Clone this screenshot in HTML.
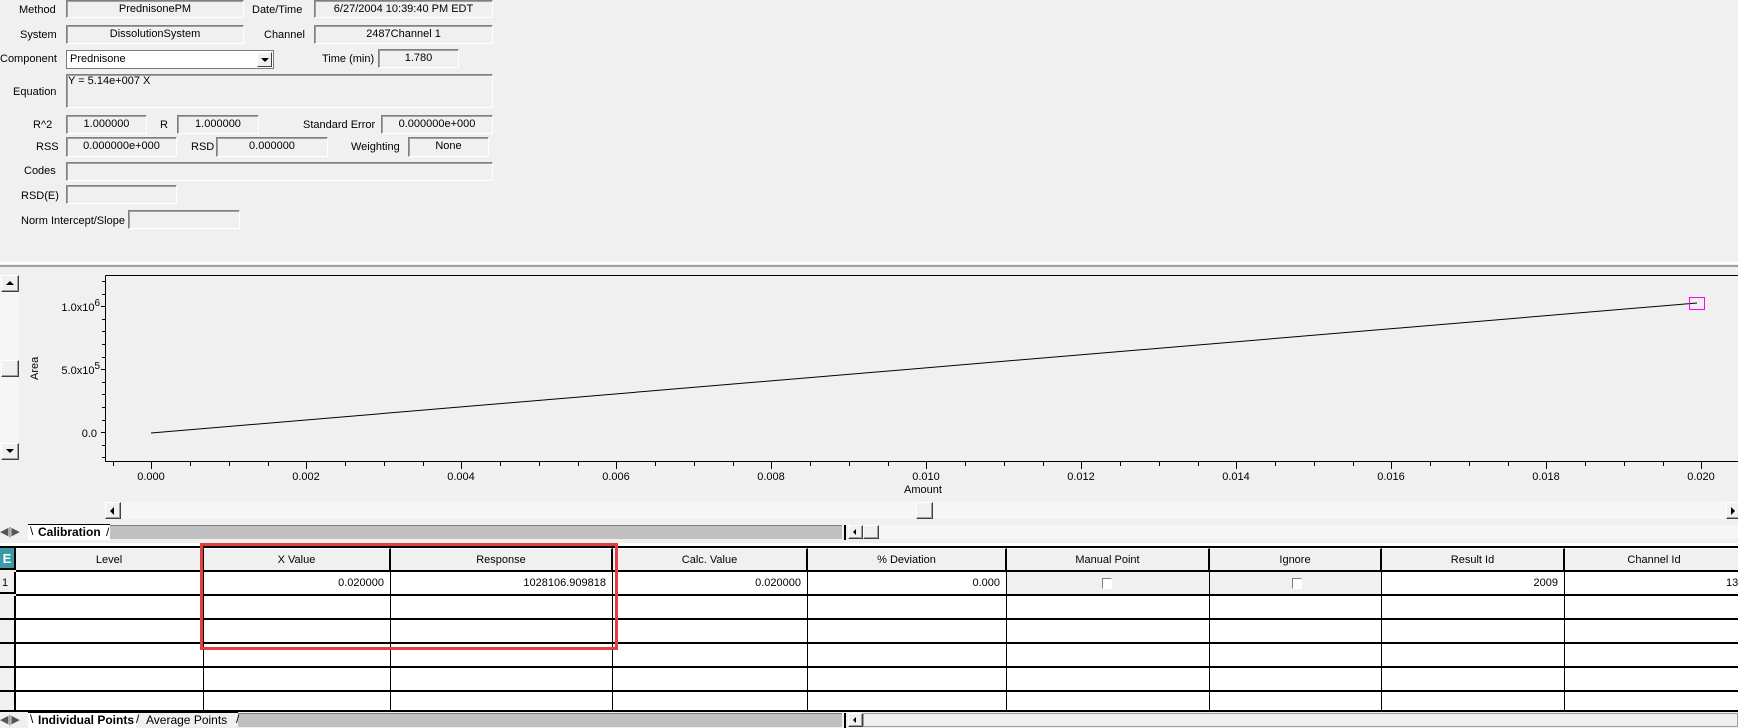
<!DOCTYPE html>
<html><head><meta charset="utf-8"><style>
*{margin:0;padding:0;box-sizing:border-box}
body{width:1738px;height:728px;background:#f0f0f0;position:relative;overflow:hidden;font-family:"Liberation Sans",Arial,sans-serif;font-size:11px;color:#000}
.a{position:absolute;white-space:nowrap}
.bx{position:absolute;border:1px solid;border-color:#808080 #fff #fff #808080;background:#f0f0f0;text-align:center;line-height:16px;box-shadow:inset 1px 1px 0 #a0a0a0}
.lb{position:absolute;white-space:nowrap;line-height:14px}
.g{position:absolute;border-right:1px solid #000;border-bottom:2px solid #000;background:#fff;text-align:right;padding-right:6px;line-height:22px}
.h{position:absolute;border-right:2px solid #000;border-bottom:2px solid #000;background:#f0f0f0;text-align:center;line-height:22px;border-top:1px solid #fff}
.btn{position:absolute;background:#f0f0f0;border:1px solid;border-color:#fff #404040 #404040 #fff;box-shadow:inset -1px -1px 0 #a0a0a0}
.dot{position:absolute;background:#f6f6f6}
</style></head><body>
<div class="lb" style="left:19px;top:3px">Method</div>
<div class="bx" style="left:66px;top:0;width:178px;height:18px">PrednisonePM</div>
<div class="lb" style="left:252px;top:3px">Date/Time</div>
<div class="bx" style="left:314px;top:0;width:179px;height:18px">6/27/2004 10:39:40 PM EDT</div>
<div class="lb" style="left:20px;top:28px">System</div>
<div class="bx" style="left:66px;top:25px;width:178px;height:19px">DissolutionSystem</div>
<div class="lb" style="left:264px;top:28px">Channel</div>
<div class="bx" style="left:314px;top:25px;width:179px;height:19px">2487Channel 1</div>
<div class="lb" style="left:0;top:52px">Component</div>
<div style="position:absolute;left:66px;top:50px;width:208px;height:19px;background:#fff;border:1px solid #7a7a7a;line-height:17px;padding-left:3px">Prednisone
<div style="position:absolute;right:1px;top:1px;width:15px;height:15px;border:1px solid;border-color:#fff #404040 #404040 #fff;background:#f0f0f0"><div style="position:absolute;left:3px;top:5px;border-left:4px solid transparent;border-right:4px solid transparent;border-top:4px solid #000"></div></div></div>
<div class="lb" style="left:322px;top:52px">Time (min)</div>
<div class="bx" style="left:378px;top:49px;width:81px;height:19px">1.780</div>
<div class="lb" style="left:13px;top:85px">Equation</div>
<div class="bx" style="left:66px;top:74px;width:427px;height:34px;text-align:left;padding-left:1px;line-height:12px">Y = 5.14e+007 X</div>
<div class="lb" style="left:33px;top:118px">R^2</div>
<div class="bx" style="left:66px;top:115px;width:81px;height:19px">1.000000</div>
<div class="lb" style="left:160px;top:118px">R</div>
<div class="bx" style="left:177px;top:115px;width:82px;height:19px">1.000000</div>
<div class="lb" style="left:303px;top:118px">Standard Error</div>
<div class="bx" style="left:381px;top:115px;width:112px;height:19px">0.000000e+000</div>
<div class="lb" style="left:36px;top:140px">RSS</div>
<div class="bx" style="left:66px;top:137px;width:111px;height:20px">0.000000e+000</div>
<div class="lb" style="left:191px;top:140px">RSD</div>
<div class="bx" style="left:216px;top:137px;width:112px;height:20px">0.000000</div>
<div class="lb" style="left:351px;top:140px">Weighting</div>
<div class="bx" style="left:408px;top:137px;width:81px;height:20px">None</div>
<div class="lb" style="left:24px;top:164px">Codes</div>
<div class="bx" style="left:66px;top:162px;width:427px;height:19px"></div>
<div class="lb" style="left:21px;top:189px">RSD(E)</div>
<div class="bx" style="left:66px;top:185px;width:111px;height:19px"></div>
<div class="lb" style="left:21px;top:214px">Norm Intercept/Slope</div>
<div class="bx" style="left:128px;top:210px;width:112px;height:19px"></div>
<div class="a" style="left:0;top:262px;width:1738px;height:2px;background:#fff"></div>
<div class="a" style="left:0;top:265px;width:1738px;height:2px;background:#a0a0a0"></div>
<div class="dot" style="left:0;top:275px;width:19px;height:185px"></div>
<div class="btn" style="left:1px;top:275px;width:18px;height:17px"><div style="position:absolute;left:4px;top:5px;border-left:4px solid transparent;border-right:4px solid transparent;border-bottom:4px solid #000"></div></div>
<div class="btn" style="left:1px;top:360px;width:18px;height:17px"></div>
<div class="btn" style="left:1px;top:443px;width:18px;height:17px"><div style="position:absolute;left:4px;top:5px;border-left:4px solid transparent;border-right:4px solid transparent;border-top:4px solid #000"></div></div>
<svg class="a" style="left:0;top:268px" width="1738" height="232" font-family="Liberation Sans,Arial,sans-serif" font-size="11">
<g stroke="#000" stroke-width="1" fill="none">
<path d="M105.5 7.5H1738M105.5 7.5V193.5H1738"/>
<path d="M101 38.5h5M101 101.5h5M101 164.5h5M102 13.5h4M102 26.5h4M102 51.5h4M102 63.5h4M102 76.5h4M102 89.5h4M102 114.5h4M102 126.5h4M102 139.5h4M102 152.5h4M102 177.5h4M102 189.5h4"/>
<path d="M113.5 194v4M151.5 194v7M190.5 194v4M229.5 194v4M268.5 194v4M306.5 194v7M345.5 194v4M384.5 194v4M423.5 194v4M461.5 194v7M500.5 194v4M539.5 194v4M578.5 194v4M616.5 194v7M655.5 194v4M694.5 194v4M733.5 194v4M771.5 194v7M810.5 194v4M849.5 194v4M888.5 194v4M926.5 194v7M965.5 194v4M1004.5 194v4M1043.5 194v4M1081.5 194v7M1120.5 194v4M1159.5 194v4M1198.5 194v4M1236.5 194v7M1275.5 194v4M1314.5 194v4M1353.5 194v4M1391.5 194v7M1430.5 194v4M1469.5 194v4M1508.5 194v4M1546.5 194v7M1585.5 194v4M1624.5 194v4M1663.5 194v4M1701.5 194v7"/>
<path d="M151 165L1697 35"/>
</g>
<rect x="1689.5" y="29.5" width="15" height="12" fill="none" stroke="#f0f" stroke-width="1"/>
<text x="100" y="43" text-anchor="end">1.0x10<tspan dy="-5" font-size="10">6</tspan></text>
<text x="100" y="106" text-anchor="end">5.0x10<tspan dy="-5" font-size="10">5</tspan></text>
<text x="97" y="169" text-anchor="end">0.0</text>
<text transform="translate(38,112) rotate(-90)">Area</text>
<g text-anchor="middle">
<text x="151" y="212">0.000</text><text x="306" y="212">0.002</text><text x="461" y="212">0.004</text><text x="616" y="212">0.006</text><text x="771" y="212">0.008</text><text x="926" y="212">0.010</text><text x="1081" y="212">0.012</text><text x="1236" y="212">0.014</text><text x="1391" y="212">0.016</text><text x="1546" y="212">0.018</text><text x="1701" y="212">0.020</text>
<text x="923" y="225">Amount</text></g>
</svg>
<div class="dot" style="left:105px;top:502px;width:1633px;height:17px"></div>
<div class="btn" style="left:105px;top:502px;width:16px;height:17px"><div style="position:absolute;left:4px;top:4px;border-top:4px solid transparent;border-bottom:4px solid transparent;border-right:4px solid #000"></div></div>
<div class="btn" style="left:916px;top:502px;width:17px;height:17px"></div>
<div class="btn" style="left:1726px;top:502px;width:14px;height:17px"><div style="position:absolute;left:4px;top:4px;border-top:4px solid transparent;border-bottom:4px solid transparent;border-left:4px solid #000"></div></div>
<div class="a" style="left:0;top:524px;width:1738px;height:17px;background:#f0f0f0"></div>
<div class="a" style="left:108px;top:525px;width:734px;height:14px;background:#c0c0c0;border-top:1px solid #808080"></div>
<div class="a" style="left:0;top:525px;font-size:11px;color:#555">◀|▶</div>
<div class="a" style="left:28px;top:524px;width:82px;height:16px;background:#fff;border-top:1px solid #000;font-weight:bold;font-size:12px;line-height:15px;padding-left:10px">Calibration</div>
<div class="a" style="left:30px;top:524px;font-size:12px">\</div>
<div class="a" style="left:106px;top:525px;font-size:12px">/</div>
<div class="a" style="left:844px;top:525px;width:2px;height:15px;background:#000"></div>
<div class="btn" style="left:848px;top:525px;width:15px;height:14px"><div style="position:absolute;left:4px;top:3px;border-top:3px solid transparent;border-bottom:3px solid transparent;border-right:3px solid #000"></div></div>
<div class="btn" style="left:863px;top:525px;width:16px;height:14px"></div>
<div class="dot" style="left:879px;top:525px;width:859px;height:14px"></div>
<div class="a" style="left:0;top:543px;width:1738px;height:3px;background:#fff"></div>
<div class="a" style="left:0;top:546px;width:1738px;height:2px;background:#000"></div>
<div class="a" style="left:0;top:548px;width:16px;height:22px;background:#3a9aa8;color:#fff;font-weight:bold;font-size:13px;text-align:center;line-height:22px;border-right:2px solid #000;border-bottom:2px solid #000">E</div>
<div class="h" style="left:16px;top:548px;width:188px;height:24px">Level</div>
<div class="h" style="left:204px;top:548px;width:187px;height:24px">X Value</div>
<div class="h" style="left:391px;top:548px;width:222px;height:24px">Response</div>
<div class="h" style="left:613px;top:548px;width:195px;height:24px">Calc. Value</div>
<div class="h" style="left:808px;top:548px;width:199px;height:24px">% Deviation</div>
<div class="h" style="left:1007px;top:548px;width:203px;height:24px">Manual Point</div>
<div class="h" style="left:1210px;top:548px;width:172px;height:24px">Ignore</div>
<div class="h" style="left:1382px;top:548px;width:183px;height:24px">Result Id</div>
<div class="h" style="left:1565px;top:548px;width:180px;height:24px">Channel Id</div>
<div class="a" style="left:0;top:572px;width:16px;height:22px;background:#f0f0f0;line-height:22px;padding-left:2px;border-right:2px solid #000;border-bottom:2px solid #000">1</div>
<div class="g" style="left:16px;top:572px;width:188px;height:24px"></div>
<div class="g" style="left:204px;top:572px;width:187px;height:24px">0.020000</div>
<div class="g" style="left:391px;top:572px;width:222px;height:24px">1028106.909818</div>
<div class="g" style="left:613px;top:572px;width:195px;height:24px">0.020000</div>
<div class="g" style="left:808px;top:572px;width:199px;height:24px">0.000</div>
<div class="g" style="left:1007px;top:572px;width:203px;height:24px;background:#f0f0f0"><div style="position:absolute;left:95px;top:6px;width:10px;height:11px;border:1px solid;border-color:#808080 #fff #fff #808080;background:#fff"></div></div>
<div class="g" style="left:1210px;top:572px;width:172px;height:24px;background:#f0f0f0"><div style="position:absolute;left:82px;top:6px;width:10px;height:11px;border:1px solid;border-color:#808080 #fff #fff #808080;background:#fff"></div></div>
<div class="g" style="left:1382px;top:572px;width:183px;height:24px">2009</div>
<div class="g" style="left:1565px;top:572px;width:180px;height:24px;text-align:left;padding-left:161px">134</div>
<div class="a" style="left:0;top:596px;width:1738px;height:116px;background:#fff"></div>
<div class="a" style="left:0;top:596px;width:16px;height:116px;background:#f0f0f0;border-right:2px solid #000"></div>
<div class="a" style="left:0;top:618px;width:1738px;height:2px;background:#000"></div>
<div class="a" style="left:0;top:642px;width:1738px;height:2px;background:#000"></div>
<div class="a" style="left:0;top:666px;width:1738px;height:2px;background:#000"></div>
<div class="a" style="left:0;top:690px;width:1738px;height:2px;background:#000"></div>
<div class="a" style="left:0;top:710px;width:1738px;height:2px;background:#000"></div>
<div class="a" style="left:203px;top:596px;width:1px;height:116px;background:#000"></div>
<div class="a" style="left:390px;top:596px;width:1px;height:116px;background:#000"></div>
<div class="a" style="left:612px;top:596px;width:1px;height:116px;background:#000"></div>
<div class="a" style="left:807px;top:596px;width:1px;height:116px;background:#000"></div>
<div class="a" style="left:1006px;top:596px;width:1px;height:116px;background:#000"></div>
<div class="a" style="left:1209px;top:596px;width:1px;height:116px;background:#000"></div>
<div class="a" style="left:1381px;top:596px;width:1px;height:116px;background:#000"></div>
<div class="a" style="left:1564px;top:596px;width:1px;height:116px;background:#000"></div>
<div class="a" style="left:200px;top:543px;width:418px;height:107px;border:3px solid #e04040"></div>
<div class="a" style="left:0;top:712px;width:1738px;height:16px;background:#f0f0f0"></div>
<div class="a" style="left:236px;top:713px;width:606px;height:14px;background:#c0c0c0;border-top:1px solid #808080"></div>
<div class="a" style="left:0;top:713px;font-size:11px;color:#555">◀|▶</div>
<div class="a" style="left:28px;top:712px;width:108px;height:16px;background:#fff;border-top:1px solid #000;font-weight:bold;font-size:12px;line-height:15px;padding-left:10px">Individual Points</div>
<div class="a" style="left:30px;top:712px;font-size:12px">\</div>
<div class="a" style="left:136px;top:712px;width:102px;height:15px;background:#f0f0f0;font-size:12px;line-height:15px;padding-left:10px;border-top:1px solid #000">Average Points</div>
<div class="a" style="left:136px;top:712px;font-size:12px">/</div>
<div class="a" style="left:236px;top:712px;font-size:12px">/</div>
<div class="a" style="left:844px;top:713px;width:2px;height:15px;background:#000"></div>
<div class="btn" style="left:848px;top:713px;width:15px;height:14px"><div style="position:absolute;left:4px;top:3px;border-top:3px solid transparent;border-bottom:3px solid transparent;border-right:3px solid #000"></div></div>
<div class="a" style="left:863px;top:713px;width:875px;height:14px;background:#f0f0f0;border:1px solid #a0a0a0"></div>
</body></html>
